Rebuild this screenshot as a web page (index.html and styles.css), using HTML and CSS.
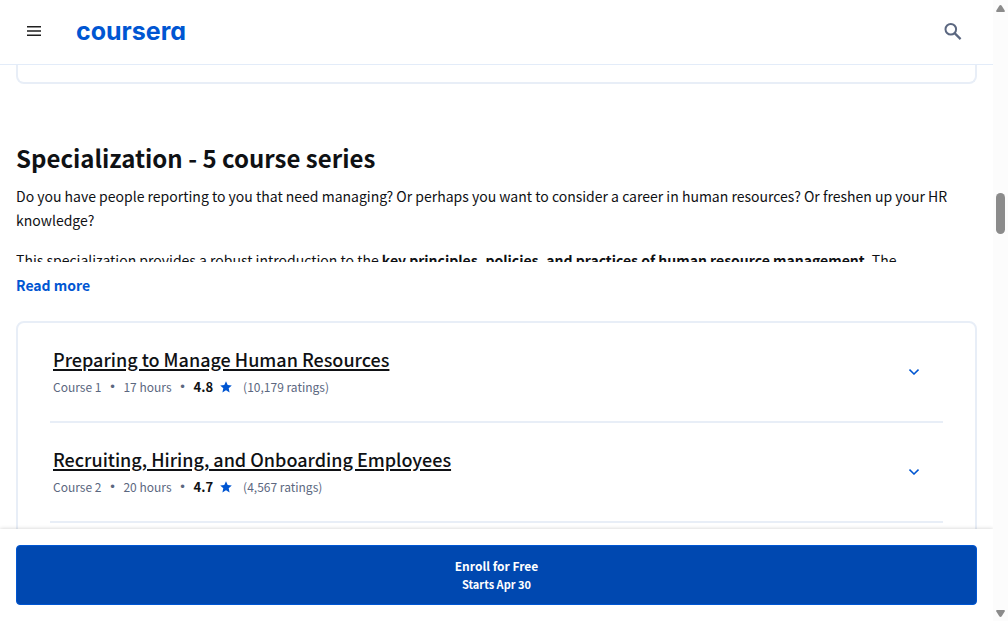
FILE: index.html
```html
<!DOCTYPE html>
<html lang="en">
<head>
<meta charset="utf-8">
<meta name="viewport" content="width=device-width, initial-scale=1">
<title>Specialization | Coursera</title>
<link rel="stylesheet" href="styles.css">
</head>
<body>
<div class="shell">
  <div class="view">
    <header class="topbar">
      <button class="icon-button" type="button" aria-label="Menu">
        <svg width="14" height="10" viewBox="0 0 14 10" fill="#1f1f1f"><path d="M0 0h14v1.6H0zM0 4.2h14v1.6H0zM0 8.4h14V10H0z"/></svg>
      </button>
      <a class="logo" href="#">coursera</a>
      <button class="icon-button search" type="button" aria-label="Search">
        <svg width="18" height="18" viewBox="0 0 18 18" fill="none" stroke="#5b6780" stroke-width="2"><circle cx="6.8" cy="7.3" r="5.3"/><path d="M10.600 11.100l6 6" stroke-width="2.2"/></svg>
      </button>
    </header>

    <main class="content">
      <div class="previous-card"></div>
      <h2 class="heading">Specialization - 5 course series</h2>
      <div class="description">
        <p>Do you have people reporting to you that need managing? Or perhaps you want to consider a career in human resources? Or freshen up your HR knowledge?</p>
        <p>This specialization provides a robust introduction to the <strong>key principles, policies, and practices of human resource management</strong>. The</p>
      </div>
      <button class="read-more" type="button">Read more</button>

      <div class="courses">
        <article class="course">
          <div class="course-info">
            <h3><a href="#">Preparing to Manage Human Resources</a></h3>
            <div class="meta">
              <span>Course 1</span><span class="dot">•</span><span>17 hours</span><span class="dot">•</span><strong>4.8</strong>
              <svg class="star" width="12" height="12" viewBox="0 0 12 12" fill="#0056d2"><path d="M6 .3l1.7 3.8 4.1.4-3.1 2.8.9 4.1L6 9.3l-3.6 2.1.9-4.1L.2 4.5l4.1-.4z"/></svg>
              <span>(10,179 ratings)</span>
            </div>
          </div>
          <button class="toggle" type="button" aria-label="Show details of course 1">
            <svg width="10" height="6" viewBox="0 0 10 6" fill="none" stroke="#0056d2" stroke-width="1.5"><path d="M.5.6L5 5 9.500.6"/></svg>
          </button>
        </article>
        <article class="course">
          <div class="course-info">
            <h3><a href="#">Recruiting, Hiring, and Onboarding Employees</a></h3>
            <div class="meta">
              <span>Course 2</span><span class="dot">•</span><span>20 hours</span><span class="dot">•</span><strong>4.7</strong>
              <svg class="star" width="12" height="12" viewBox="0 0 12 12" fill="#0056d2"><path d="M6 .3l1.7 3.8 4.1.4-3.1 2.8.9 4.1L6 9.3l-3.6 2.1.9-4.1L.2 4.5l4.1-.4z"/></svg>
              <span>(4,567 ratings)</span>
            </div>
          </div>
          <button class="toggle" type="button" aria-label="Show details of course 2">
            <svg width="10" height="6" viewBox="0 0 10 6" fill="none" stroke="#0056d2" stroke-width="1.5"><path d="M.5.6L5 5 9.500.6"/></svg>
          </button>
        </article>
      </div>
    </main>

    <footer class="enroll-bar">
      <button class="enroll" type="button">
        <span class="enroll-title">Enroll for Free</span>
        <span class="enroll-date">Starts Apr 30</span>
      </button>
    </footer>
  </div>

  <div class="scrollbar" aria-hidden="true">
    <svg width="9" height="7" viewBox="0 0 9 7" fill="#8b8b8b"><path d="M4.500 0q.7 0 1.200.7L8.700 5.500Q9.300 7 8 7H1Q-.3 7 .3 5.500L3.300.7Q3.800 0 4.500 0z"/></svg>
    <div class="track"><div class="thumb"></div></div>
    <svg width="9" height="7" viewBox="0 0 9 7" fill="#8b8b8b"><path d="M4.500 7q.7 0 1.200-.7L8.700 1.500Q9.300 0 8 0H1Q-.3 0 .3 1.500L3.300 6.300Q3.800 7 4.500 7z"/></svg>
  </div>
</div>
</body>
</html>
```
FILE: styles.css
```css
* {
  box-sizing: border-box;
}

body {
  margin: 0;
  background: #fff;
  color: #0f1114;
  font-family: "Noto Sans CJK SC", "Noto Sans", sans-serif;
  font-size: 14px;
  line-height: 24px;
}

h2, h3, p {
  margin: 0;
}

button {
  padding: 0;
  border: 0;
  background: none;
  font: inherit;
  cursor: pointer;
}

svg {
  display: block;
  flex: none;
}

.shell {
  display: flex;
  height: 100vh;
}

.view {
  display: flex;
  flex: 1;
  flex-direction: column;
  min-width: 0;
  overflow: hidden;
}

.topbar {
  display: flex;
  flex: none;
  align-items: center;
  height: 65px;
  padding: 0 24px 2px 18px;
  border-bottom: 1px solid #e3ecf9;
}

.icon-button {
  display: grid;
  place-items: center;
  width: 32px;
  height: 32px;
}

.search {
  margin-left: auto;
}

.logo {
  margin-left: 26px;
  color: #0056d2;
  font-family: Inter, sans-serif;
  font-size: 25px;
  font-weight: 700;
  font-feature-settings: "cv11";
  line-height: 32px;
  text-decoration: none;
}

.content {
  flex: 1;
  min-height: 0;
  padding: 0 16px;
  overflow: hidden;
}

.previous-card {
  height: 19px;
  border: 2px solid #e8eef7;
  border-top: 0;
  border-radius: 0 0 8px 8px;
}

.heading {
  margin-top: 58px;
  font-size: 24px;
  font-weight: 700;
  line-height: 32px;
}

.description {
  height: 78px;
  margin-top: 10px;
  overflow: hidden;
}

.description p + p {
  margin-top: 16px;
}

.read-more {
  display: block;
  margin-top: 11px;
  color: #0056d2;
  font-weight: 700;
}

.courses {
  margin-top: 24px;
  padding: 0 32px 32px;
  border: 2px solid #e8eef7;
  border-radius: 8px;
}

.course {
  display: flex;
  align-items: center;
  justify-content: space-between;
  height: 100px;
  padding: 0 24px 0 3px;
  border-bottom: 2px solid #e8eef7;
}

.course h3 {
  font-size: 18px;
  font-weight: 500;
  line-height: 26px;
}

.course h3 a {
  color: inherit;
  text-decoration-thickness: 2px;
  text-underline-offset: 2px;
}

.meta {
  display: flex;
  align-items: center;
  margin-top: 3px;
  color: #5b6780;
  font-size: 12px;
  line-height: 24px;
}

.meta strong {
  color: #0f1114;
  font-size: 13px;
}

.dot {
  width: 22px;
  font-family: "DejaVu Sans", sans-serif;
  text-align: center;
}

.star {
  margin: 0 11px 0 7px;
}

.toggle {
  display: grid;
  place-items: center;
  width: 10px;
  height: 24px;
}

.enroll-bar {
  position: relative;
  flex: none;
  padding: 16px;
  background: #fff;
  box-shadow: 0 0 4px rgb(0 0 0 / 20%);
}

.enroll {
  display: flex;
  flex-direction: column;
  align-items: center;
  justify-content: center;
  width: 100%;
  height: 60px;
  border: 1px solid #0056d2;
  border-radius: 4px;
  background: #0048b0;
  color: #fff;
  font-size: 12px;
  font-weight: 700;
  line-height: 18px;
}

.enroll-date {
  font-size: 11px;
}

.scrollbar {
  display: flex;
  flex: none;
  flex-direction: column;
  align-items: center;
  width: 15px;
  padding: 5px 0 4px;
  background: #fcfcfc;
}

.track {
  flex: 1;
  padding-top: 181px;
}

.thumb {
  width: 9px;
  height: 41px;
  border-radius: 5px;
  background: #8b8b8b;
}
```
